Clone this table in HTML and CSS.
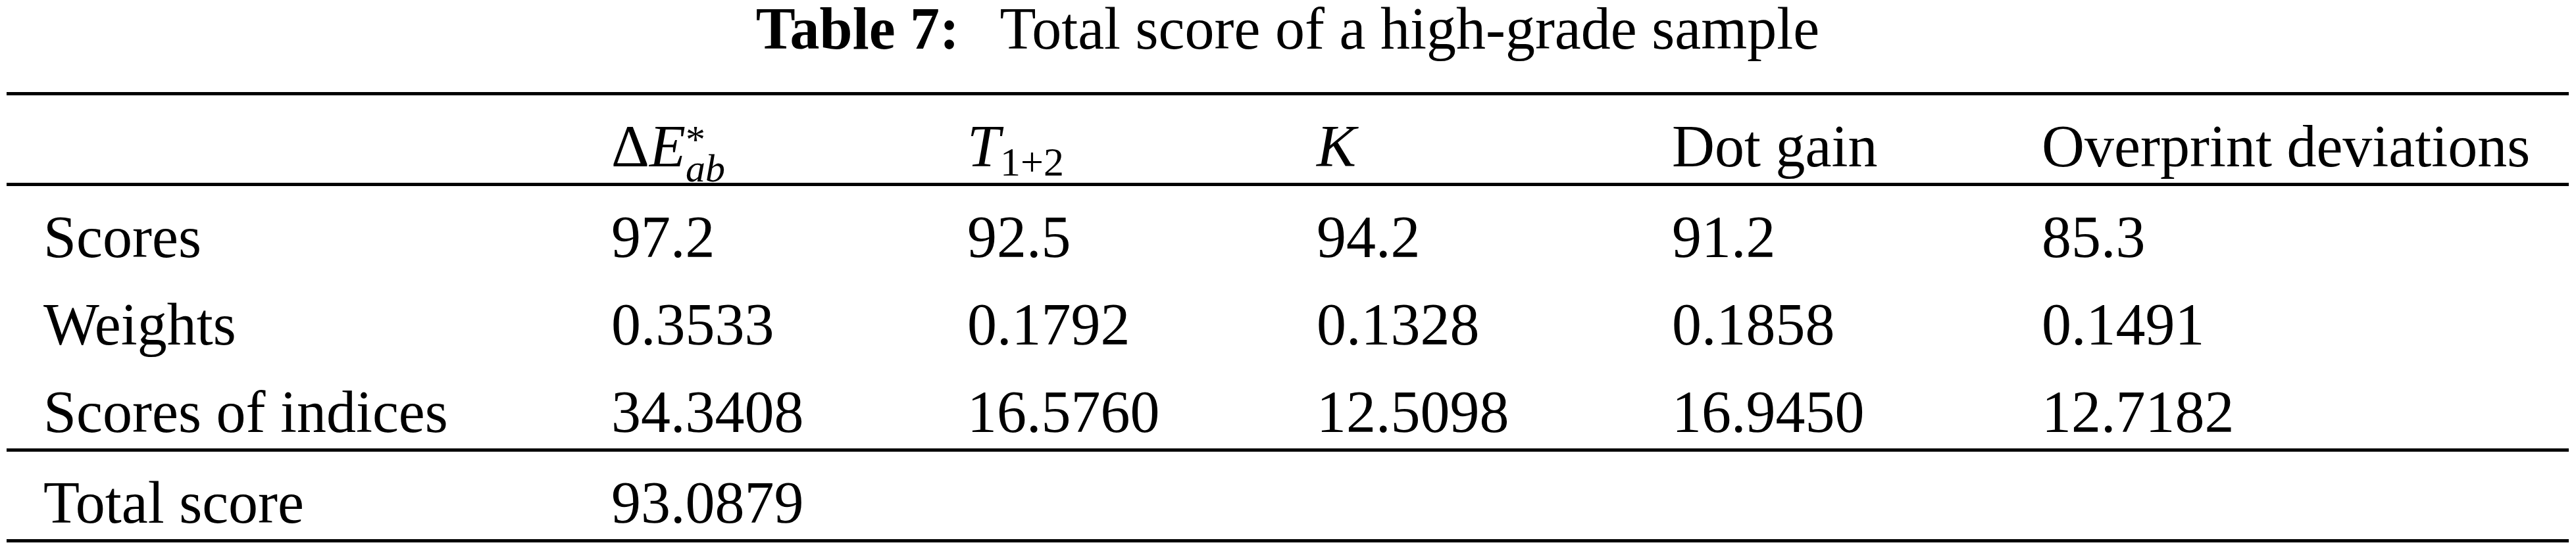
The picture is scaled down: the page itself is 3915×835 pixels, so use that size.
FILE: index.html
```html
<!DOCTYPE html>
<html lang="en">
<head>
  <meta charset="UTF-8">
  <title>Table 7: Total score of a high-grade sample</title>
  <link rel="stylesheet" href="styles.css">
</head>
<body>
  <table class="score-table">
    <caption><strong>Table 7:</strong> Total score of a high-grade sample</caption>
    <colgroup>
      <col class="c-label">
      <col class="c-de">
      <col class="c-t">
      <col class="c-k">
      <col class="c-dot">
      <col class="c-over">
    </colgroup>
    <thead>
      <tr>
        <th></th>
        <th>&Delta;<i>E</i><sup class="star">*</sup><sub class="ab"><i>ab</i></sub></th>
        <th><i>T</i><sub class="sum">1+2</sub></th>
        <th><i>K</i></th>
        <th>Dot gain</th>
        <th>Overprint deviations</th>
      </tr>
    </thead>
    <tbody>
      <tr>
        <td>Scores</td>
        <td>97.2</td>
        <td>92.5</td>
        <td>94.2</td>
        <td>91.2</td>
        <td>85.3</td>
      </tr>
      <tr>
        <td>Weights</td>
        <td>0.3533</td>
        <td>0.1792</td>
        <td>0.1328</td>
        <td>0.1858</td>
        <td>0.1491</td>
      </tr>
      <tr>
        <td>Scores of indices</td>
        <td>34.3408</td>
        <td>16.5760</td>
        <td>12.5098</td>
        <td>16.9450</td>
        <td>12.7182</td>
      </tr>
      <tr class="total">
        <td>Total score</td>
        <td>93.0879</td>
        <td></td>
        <td></td>
        <td></td>
        <td></td>
      </tr>
    </tbody>
  </table>
</body>
</html>
```

FILE: styles.css
```css
body {
  margin: 0;
  background: #fff;
  color: #000;
  font-family: "Liberation Serif", "Times New Roman", serif;
}
.score-table {
  margin-left: 10px;
  width: 3894px;
  table-layout: fixed;
  border-collapse: separate;
  border-spacing: 0;
  font-size: 90px;
}
.score-table caption {
  line-height: 88px;
  padding-bottom: 52px;
  text-align: center;
  white-space: nowrap;
}
.score-table caption strong {
  margin-right: 0.45em;
}
.c-label { width: 919px; }
.c-de { width: 541px; }
.c-t { width: 531px; }
.c-k { width: 540px; }
.c-dot { width: 562px; }
.c-over { width: 801px; }

.score-table th,
.score-table td {
  box-sizing: border-box;
  padding: 22px 0 0 0;
  height: 133px;
  line-height: 111px;
  text-align: left;
  font-weight: normal;
  vertical-align: top;
  white-space: nowrap;
}
.score-table th:first-child,
.score-table td:first-child {
  padding-left: 56px;
}
.score-table thead th {
  height: 143px;
  border-top: 5px solid #000;
  border-bottom: 5px solid #000;
}
.score-table .total td {
  height: 143px;
  border-top: 5px solid #000;
  border-bottom: 5px solid #000;
}

sup, sub {
  line-height: 0;
  font-size: 60px;
}
.star {
  vertical-align: 21px;
  margin-right: -30px;
}
.ab {
  vertical-align: -23px;
}
.sum {
  font-size: 62px;
  vertical-align: -14px;
}
```
